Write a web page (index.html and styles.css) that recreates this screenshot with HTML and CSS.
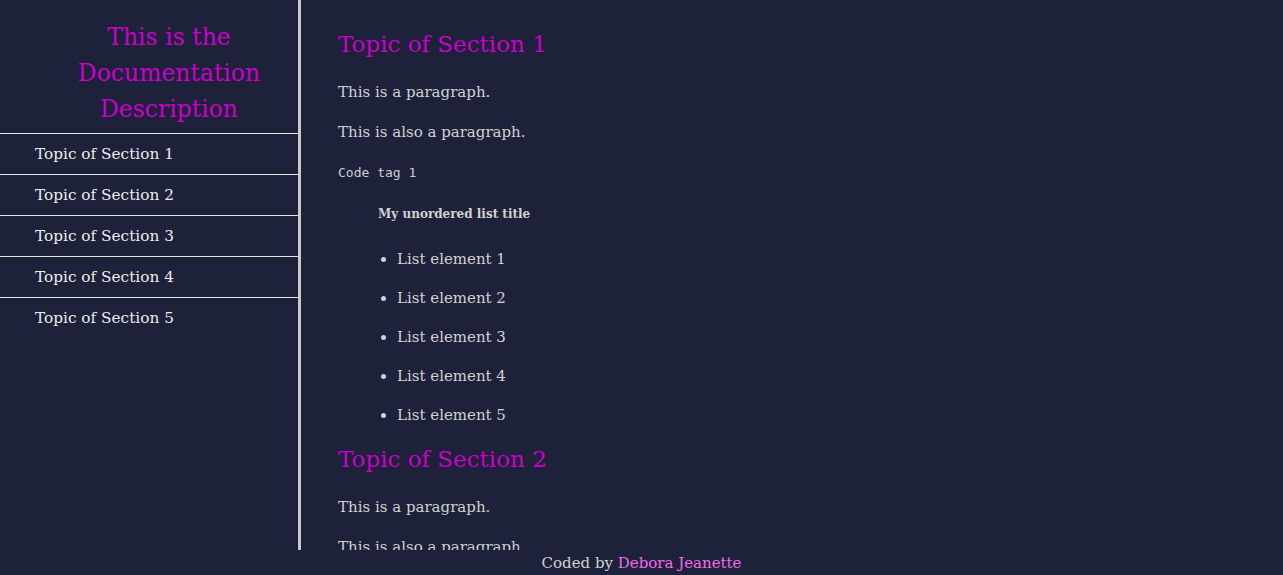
FILE: index.html
```html
<!DOCTYPE html>
<html lang="en">
<head>
<meta charset="utf-8">
<title>Documentation</title>
<link rel="stylesheet" href="styles.css">
</head>
<body>
<div class="layout">
  <nav class="navbar">
    <header class="nav-title">This is the Documentation Description</header>
    <ul class="nav-list">
      <li><a class="nav-link" href="#s1">Topic of Section 1</a></li>
      <li><a class="nav-link" href="#s2">Topic of Section 2</a></li>
      <li><a class="nav-link" href="#s3">Topic of Section 3</a></li>
      <li><a class="nav-link" href="#s4">Topic of Section 4</a></li>
      <li><a class="nav-link" href="#s5">Topic of Section 5</a></li>
    </ul>
  </nav>
  <main class="main">
    <section class="section" id="s1">
      <h2 class="section-title">Topic of Section 1</h2>
      <p class="para">This is a paragraph.</p>
      <p class="para">This is also a paragraph.</p>
      <p class="code-line"><code>Code tag 1</code></p>
      <h5 class="list-title">My unordered list title</h5>
      <ul class="list">
        <li>List element 1</li>
        <li>List element 2</li>
        <li>List element 3</li>
        <li>List element 4</li>
        <li>List element 5</li>
      </ul>
    </section>
    <section class="section" id="s2">
      <h2 class="section-title">Topic of Section 2</h2>
      <p class="para">This is a paragraph.</p>
      <p class="para">This is also a paragraph.</p>
    </section>
  </main>
</div>
<footer class="footer">Coded by <a class="footer-link" href="#">Debora Jeanette</a></footer>
</body>
</html>
```
FILE: styles.css
```css
html, body {
  margin: 0;
  padding: 0;
  background: #1d2139;
}
body {
  font-family: "DejaVu Serif", serif;
  font-size: 15px;
  line-height: 24px;
  color: #d2d2d2;
}
.layout {
  display: flex;
  height: 550px;
  overflow: hidden;
}
.navbar {
  width: 298px;
  flex-shrink: 0;
  border-right: 3px solid #c9c9c9;
}
.nav-title {
  padding: 19px 0 6px 40px;
  text-align: center;
  font-size: 23.5px;
  line-height: 36px;
  color: #cc00cc;
}
.nav-list {
  list-style: none;
  margin: 0;
  padding: 0;
}
.nav-list li {
  border-top: 1px solid #e6e6e6;
}
.nav-link {
  display: block;
  padding: 8px 35px;
  font-size: 15.3px;
  color: #ececec;
  text-decoration: none;
}
.main {
  flex: 1;
  padding: 26px 0 0 37px;
  overflow: hidden;
}
.section-title {
  margin: 0 0 18px;
  font-size: 23px;
  line-height: 36px;
  font-weight: normal;
  color: #cc00cc;
}
.para {
  margin: 0 0 16px;
}
.code-line {
  margin: 0 0 19px;
}
.code-line code {
  font-family: "DejaVu Sans Mono", monospace;
  font-size: 13px;
  color: #cfcfcf;
}
.list-title {
  margin: 0 0 23px 40px;
  font-size: 12px;
  line-height: 20px;
}
.list {
  margin: 0 0 14px;
  padding-left: 59px;
}
.list li {
  margin-bottom: 15px;
}
.list li:last-child {
  margin-bottom: 0;
}
.footer {
  text-align: center;
  line-height: 26px;
  color: #d2d2d2;
}
.footer-link {
  color: #f26af2;
  text-decoration: none;
}
```
